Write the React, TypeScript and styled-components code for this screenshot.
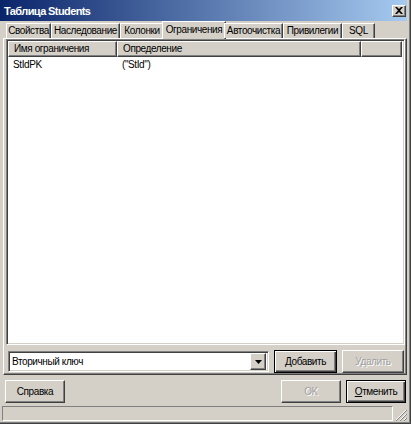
import React from 'react';
import styled, { createGlobalStyle, css } from 'styled-components';

const GlobalStyle = createGlobalStyle`
    html, body {
        margin: 0;
        padding: 0;
        background: #d4d0c8;
    }
    * {
        box-sizing: border-box;
    }
`;

const FONT = `'Liberation Sans', Arial, sans-serif`;

const raised = css`
    border-top: 1px solid #ffffff;
    border-left: 1px solid #ffffff;
    border-right: 1px solid #404040;
    border-bottom: 1px solid #404040;
    box-shadow: inset -1px -1px 0 #808080;
`;

const sunken = css`
    border-top: 1px solid #808080;
    border-left: 1px solid #808080;
    border-right: 1px solid #ffffff;
    border-bottom: 1px solid #ffffff;
    box-shadow: inset 1px 1px 0 #404040, inset -1px -1px 0 #d4d0c8;
`;

const tabs = [
    { title: 'Свойства', width: 45 },
    { title: 'Наследование', width: 69 },
    { title: 'Колонки', width: 44 },
    { title: 'Ограничения', width: 60 },
    { title: 'Автоочистка', width: 59 },
    { title: 'Привилегии', width: 59 },
    { title: 'SQL', width: 33 },
];
const activeTab = 'Ограничения';

const columns = [
    { title: 'Имя ограничения', width: 109 },
    { title: 'Определение', width: 244 },
    { title: '', width: 40 },
];

const rows = [{ name: 'StIdPK', def: '("StId")' }];

export default function App() {
    return (
        <>
            <GlobalStyle />
            <Window>
                <TitleBar>
                    <Title>Таблица Students</Title>
                    <CloseButton>
                        <svg width="8" height="7" viewBox="0 0 8 7">
                            <path d="M0 0h2l2 2 2-2h2L5 3.5 8 7H6L4 5 2 7H0l3-3.5z" fill="#000" />
                        </svg>
                    </CloseButton>
                </TitleBar>
                <Body>
                    <TabRow>
                        {tabs.map((t) => (
                            <Tab key={t.title} $active={t.title === activeTab} $width={t.width}>
                                {t.title}
                            </Tab>
                        ))}
                    </TabRow>
                    <TabPage>
                        <ListView>
                            <HeaderRow>
                                {columns.map((c, i) => (
                                    <HeaderCell key={i} $width={c.width}>
                                        {c.title}
                                    </HeaderCell>
                                ))}
                            </HeaderRow>
                            {rows.map((r) => (
                                <Row key={r.name}>
                                    <Cell $width={columns[0].width}>{r.name}</Cell>
                                    <Cell $width={columns[1].width}>{r.def}</Cell>
                                </Row>
                            ))}
                        </ListView>
                        <ActionRow>
                            <Combo>
                                <ComboText>Вторичный ключ</ComboText>
                                <ComboArrow>
                                    <svg width="7" height="4" viewBox="0 0 7 4">
                                        <path d="M0 0h7L3.5 4z" fill="#000" />
                                    </svg>
                                </ComboArrow>
                            </Combo>
                            <Button $default $width={63}>
                                Добавить
                            </Button>
                            <Button $disabled $width={62}>
                                Удалить
                            </Button>
                        </ActionRow>
                    </TabPage>
                    <ButtonRow>
                        <Button $width={60}>Справка</Button>
                        <Spacer />
                        <Button $disabled $width={60}>
                            OK
                        </Button>
                        <Button $default $width={60}>
                            <u>О</u>тменить
                        </Button>
                    </ButtonRow>
                </Body>
                <StatusBar>
                    <StatusPanel />
                    <Grip>
                        <svg width="12" height="12" viewBox="0 0 12 12">
                            <path d="M11 1L1 11M11 5L5 11M11 9L9 11" stroke="#fff" />
                            <path d="M12 1L1 12M12 5L5 12M12 9L9 12" stroke="#808080" />
                        </svg>
                    </Grip>
                </StatusBar>
            </Window>
        </>
    );
}

const Window = styled.div`
    width: 411px;
    height: 424px;
    display: flex;
    flex-direction: column;
    background: #d4d0c8;
    border-right: 1px solid #404040;
    border-bottom: 1px solid #404040;
    box-shadow: inset -1px -1px 0 #808080;
    padding: 0 3px 2px 0;
    font-family: ${FONT};
    font-size: 10px;
    letter-spacing: -0.4px;
    color: #000;
`;

const TitleBar = styled.div`
    height: 21px;
    flex-shrink: 0;
    display: flex;
    align-items: center;
    padding: 0 1px 0 4px;
    background: linear-gradient(to right, #0a246a, #a6caf0);
`;

const Title = styled.div`
    flex: 1;
    color: #fff;
    font-weight: bold;
    font-size: 11px;
    letter-spacing: -0.6px;
`;

const CloseButton = styled.div`
    width: 14px;
    height: 12px;
    display: flex;
    align-items: center;
    justify-content: center;
    background: #d4d0c8;
    ${raised};
`;

const Body = styled.div`
    flex: 1;
    display: flex;
    flex-direction: column;
    padding: 0 0 0 3px;
`;

const TabRow = styled.div`
    display: flex;
    align-items: flex-end;
    height: 17px;
    flex-shrink: 0;
    padding-left: 3px;
    position: relative;
    z-index: 1;
`;

const Tab = styled.div<{ $active?: boolean; $width: number }>`
    width: ${({ $width }) => $width}px;
    flex-shrink: 0;
    height: 15px;
    line-height: 14px;
    text-align: center;
    border-top: 1px solid #fff;
    border-left: 1px solid #fff;
    border-right: 1px solid #404040;
    box-shadow: inset -1px 0 0 #808080;
    background: #d4d0c8;
    white-space: nowrap;
    ${({ $active, $width }) =>
        $active &&
        css`
            width: ${$width + 4}px;
            height: 18px;
            margin: 0 -2px -1px;
            line-height: 16px;
        `}
`;

const TabPage = styled.div`
    flex: 1;
    display: flex;
    flex-direction: column;
    padding: 0 1px 1px 2px;
    ${raised};
`;

const ListView = styled.div`
    flex: 1;
    background: #fff;
    overflow: hidden;
    ${sunken};
    padding: 1px 2px 2px 1px;
`;

const HeaderRow = styled.div`
    display: flex;
    height: 16px;
`;

const HeaderCell = styled.div<{ $width: number }>`
    width: ${({ $width }) => $width}px;
    flex-shrink: 0;
    background: #d4d0c8;
    padding: 0 5px;
    line-height: 14px;
    white-space: nowrap;
    ${raised};
    &:last-child {
        flex: 1;
    }
`;

const Row = styled.div`
    display: flex;
    height: 16px;
    line-height: 16px;
`;

const Cell = styled.div<{ $width: number }>`
    width: ${({ $width }) => $width}px;
    flex-shrink: 0;
    padding: 0 5px;
    white-space: nowrap;
`;

const ActionRow = styled.div`
    display: flex;
    align-items: center;
    gap: 5px;
    margin-top: 5px;
    padding: 0 1px 0 2px;
`;

const Combo = styled.div`
    flex: 1;
    height: 21px;
    display: flex;
    align-items: center;
    background: #fff;
    ${sunken};
    padding: 2px;
`;

const ComboText = styled.div`
    flex: 1;
    padding-left: 1px;
`;

const ComboArrow = styled.div`
    width: 16px;
    height: 17px;
    display: flex;
    align-items: center;
    justify-content: center;
    background: #d4d0c8;
    ${raised};
`;

const Button = styled.div<{ $default?: boolean; $disabled?: boolean; $width: number }>`
    width: ${({ $width }) => $width}px;
    height: 23px;
    flex-shrink: 0;
    display: flex;
    align-items: center;
    justify-content: center;
    background: #d4d0c8;
    ${raised};
    ${({ $default }) =>
        $default &&
        css`
            border: 1px solid #000;
            box-shadow: inset 1px 1px 0 #fff, inset -1px -1px 0 #404040, inset -2px -2px 0 #808080;
        `}
    ${({ $disabled }) =>
        $disabled &&
        css`
            color: #a0a0a0;
            text-shadow: 1px 1px 0 #fff;
        `}
`;

const ButtonRow = styled.div`
    display: flex;
    align-items: center;
    gap: 5px;
    flex-shrink: 0;
    padding: 5px 1px 1px 2px;
`;

const Spacer = styled.div`
    flex: 1;
`;

const StatusBar = styled.div`
    height: 17px;
    flex-shrink: 0;
    display: flex;
    align-items: stretch;
    padding: 2px 0 0 2px;
`;

const StatusPanel = styled.div`
    flex: 1;
    border-top: 1px solid #808080;
    border-left: 1px solid #808080;
    border-right: 1px solid #fff;
    border-bottom: 1px solid #fff;
`;

const Grip = styled.div`
    width: 14px;
    display: flex;
    align-items: flex-end;
    justify-content: flex-end;
`;
